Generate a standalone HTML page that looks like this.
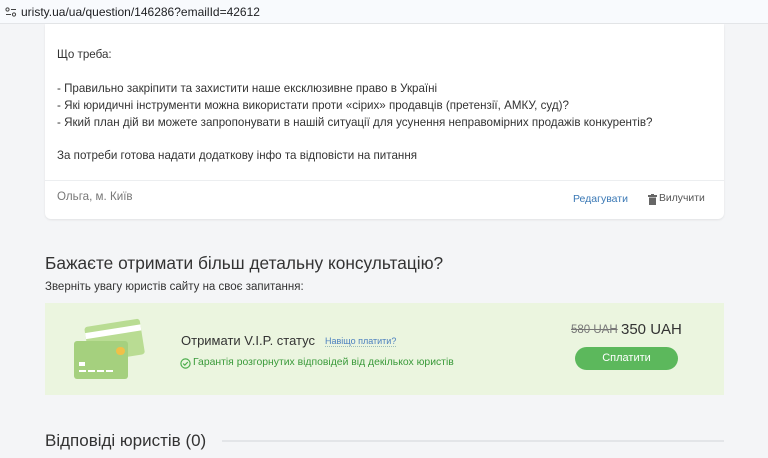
<!DOCTYPE html>
<html><head><meta charset="utf-8"><style>
body{margin:0;width:768px;height:458px;overflow:hidden;background:#f4f5f7;font-family:"Liberation Sans",Arial,sans-serif;position:relative}
.bar{position:absolute;left:0;top:0;width:768px;height:23px;background:#f8fafd;border-bottom:1px solid #e3e5e8}
.bar .url{position:absolute;left:21px;top:5px;font-size:12px;color:#202124}
.card{position:absolute;left:45px;top:24px;width:679px;height:195px;background:#fff;border-radius:0 0 6px 6px;box-shadow:0 1px 2px rgba(0,0,0,.08)}
.t{position:absolute;left:57px;font-size:11.6px;color:#333;white-space:nowrap}
.sep{position:absolute;left:45px;top:180px;width:679px;height:1px;background:#eceef0}
h2{position:absolute;left:45px;top:253px;margin:0;font-weight:normal;font-size:17.3px;color:#333}
.vip{position:absolute;left:45px;top:303px;width:679px;height:92px;background:#ebf5df}
.btn{position:absolute;left:575px;top:347px;width:103px;height:23px;border-radius:12px;background:#5cb85c;color:#fff;font-size:11px;text-align:center;line-height:23px}
</style></head><body>
<div class="bar"><svg style="position:absolute;left:5px;top:7px" width="12" height="10"><circle cx="2.5" cy="2.5" r="1.6" fill="none" stroke="#444"/><line x1="6" y1="2.5" x2="11" y2="2.5" stroke="#444"/><line x1="1" y1="7.5" x2="6" y2="7.5" stroke="#444"/><circle cx="9" cy="7.5" r="1.6" fill="none" stroke="#444"/></svg><span class="url">uristy.ua/ua/question/146286?emailId=42612</span></div>
<div class="card"></div>
<div class="t" style="top:48px">Що треба:</div>
<div class="t" style="top:82px">- Правильно закріпити та захистити наше ексклюзивне право в Україні</div>
<div class="t" style="top:99px">- Які юридичні інструменти можна використати проти «сірих» продавців (претензії, АМКУ, суд)?</div>
<div class="t" style="top:116px">- Який план дій ви можете запропонувати в нашій ситуації для усунення неправомірних продажів конкурентів?</div>
<div class="t" style="top:149px">За потреби готова надати додаткову інфо та відповісти на питання</div>
<div class="sep"></div>
<div class="t" style="top:190px;color:#777">Ольга, м. Київ</div>
<div class="t" style="top:193px;left:573px;font-size:10.5px;color:#3a78b5">Редагувати</div>
<svg style="position:absolute;left:648px;top:194px" width="9" height="11"><rect x="0" y="1" width="9" height="2" fill="#666"/><rect x="3" y="0" width="3" height="1" fill="#666"/><rect x="1" y="3.5" width="7" height="7.5" fill="#666"/></svg>
<div class="t" style="top:193px;left:659px;font-size:10.4px;color:#555">Вилучити</div>
<h2>Бажаєте отримати більш детальну консультацію?</h2>
<div class="t" style="top:281px;left:45px;font-size:11.5px">Зверніть увагу юристів сайту на своє запитання:</div>
<div class="vip"></div>
<svg style="position:absolute;left:72px;top:317px" width="74" height="64"><g transform="rotate(-9 40 20)"><rect x="14" y="6" width="56" height="36" rx="3" fill="#b9dc93"/><rect x="14" y="12" width="56" height="6" fill="#fff"/></g><rect x="2" y="24" width="54" height="38" rx="3" fill="#a5d07e"/><rect x="44" y="30" width="9" height="8" rx="4" fill="#f0c048"/><rect x="7" y="45" width="6" height="4" fill="#fff"/><rect x="7" y="53" width="7" height="2" fill="#fff"/><rect x="16" y="53" width="7" height="2" fill="#fff"/><rect x="25" y="53" width="7" height="2" fill="#fff"/><rect x="34" y="53" width="7" height="2" fill="#fff"/></svg>
<div class="t" style="top:333px;left:181px;font-size:13px">Отримати V.I.P. статус</div>
<div class="t" style="top:336px;left:325px;font-size:9px;color:#4a7fbf;border-bottom:1px dotted #9bb">Навіщо платити?</div>
<svg style="position:absolute;left:180px;top:358px" width="11" height="11"><circle cx="5.5" cy="5.5" r="4.6" fill="none" stroke="#4cae4c" stroke-width="1.2"/><path d="M3.2 5.6l1.6 1.6 3-3.2" fill="none" stroke="#4cae4c" stroke-width="1.2"/></svg>
<div class="t" style="top:357px;left:193px;font-size:10.4px;color:#3a9a3a">Гарантія розгорнутих відповідей від декількох юристів</div>
<div class="t" style="top:324px;left:571px;font-size:11.5px;color:#777;text-decoration:line-through">580 UAH</div>
<div class="t" style="top:321px;left:621px;font-size:15px;color:#333">350 UAH</div>
<div class="btn">Сплатити</div>
<div class="t" style="top:431px;left:45px;font-size:17px">Відповіді юристів (0)</div>
<div style="position:absolute;left:222px;top:440px;width:502px;height:2px;background:#e3e5e8"></div>
</body></html>
